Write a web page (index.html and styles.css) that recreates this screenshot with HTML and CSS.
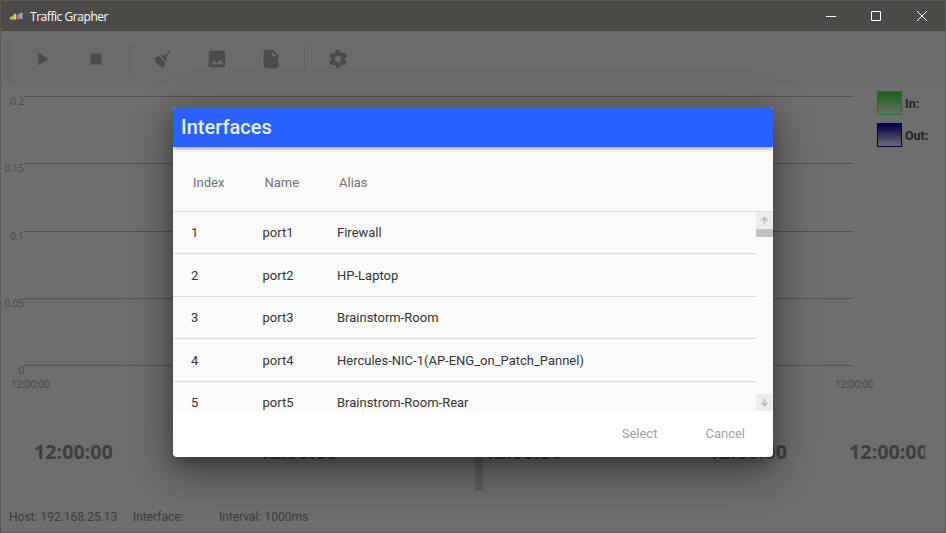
FILE: index.html
```html
<!DOCTYPE html>
<html lang="en">
<head>
<meta charset="utf-8">
<title>Traffic Grapher</title>
<link rel="stylesheet" href="styles.css">
</head>
<body>
<div class="window">
  <header class="titlebar">
    <svg class="logo" width="13" height="8" viewBox="0 0 13 8"><path fill="#a5c87b" d="M0 5l3-1v3.500H0z"/><path fill="#f1c65d" d="M3.300 2.500l2.700-1v6H3.300z"/><path fill="#df665d" d="M6.300 3l2.700-1v5.500H6.300z"/><path fill="#76b4dc" d="M9.300 1.500l3.200-1v6.500H9.300z"/></svg>
    <span class="app-name">Traffic Grapher</span>
    <div class="controls">
      <svg width="10" height="10" viewBox="0 0 10 10"><path d="M0 5.500h10"/></svg>
      <svg width="10" height="10" viewBox="0 0 10 10"><path d="M.5.5h9v9h-9z"/></svg>
      <svg width="10" height="10" viewBox="0 0 10 10"><path d="M0 0l10 10M10 0L0 10"/></svg>
    </div>
  </header>
  <nav class="toolbar">
    <i class="grip"></i>
    <div class="group"><svg viewBox="0 0 24 24"><path d="M8 5v14l11-7z"/></svg><svg viewBox="0 0 24 24"><path d="M6 6h12v12H6z"/></svg></div>
    <div class="group middle"><svg viewBox="0 0 24 24"><path d="M19.36 2.72l1.42 1.42-5.72 5.71c1.07 1.54 1.22 3.39.32 4.59L9.06 8.12c1.2-.9 3.05-.75 4.59.32l5.71-5.72M5.93 17.57c-2.01-2.01-3.24-4.41-3.58-6.65l4.88-2.09 7.44 7.44-2.09 4.88c-2.24-.34-4.64-1.57-6.65-3.58z"/></svg><svg viewBox="0 0 24 24"><path d="M5 3h14a2 2 0 0 1 2 2v14a2 2 0 0 1-2 2H5a2 2 0 0 1-2-2V5a2 2 0 0 1 2-2zm0 15h14v-1l-3.500-4.500-3 4L9 13.500z"/></svg><svg viewBox="0 0 24 24"><path d="M13 9h5.500L13 3.500V9M6 2h8l6 6v12a2 2 0 0 1-2 2H6a2 2 0 0 1-2-2V4a2 2 0 0 1 2-2z"/></svg></div>
    <div class="group last"><svg viewBox="0 0 24 24"><path d="M12 15.5A3.5 3.5 0 0 1 8.500 12 3.500 3.500 0 0 1 12 8.500a3.500 3.500 0 0 1 3.500 3.500 3.500 3.500 0 0 1-3.500 3.500m7.430-2.530c.04-.32.07-.64.07-.97s-.03-.66-.07-1l2.110-1.630c.19-.15.24-.42.12-.64l-2-3.460c-.12-.22-.39-.31-.61-.22l-2.490 1c-.52-.39-1.060-.73-1.690-.98l-.37-2.650A.506.506 0 0 0 14 2h-4c-.25 0-.46.18-.5.42l-.37 2.650c-.63.25-1.170.59-1.690.98l-2.490-1c-.22-.09-.49 0-.61.22l-2 3.460c-.13.22-.07.49.12.64L4.570 11c-.04.34-.07.67-.07 1s.03.65.07.97l-2.110 1.660c-.19.15-.25.42-.12.64l2 3.460c.12.22.39.3.61.22l2.490-1.010c.52.4 1.060.74 1.690.99l.37 2.650c.04.24.25.42.5.42h4c.25 0 .46-.18.5-.42l.37-2.650c.63-.26 1.170-.59 1.690-.99l2.490 1.010c.22.08.49 0 .61-.22l2-3.460c.12-.22.07-.49-.12-.64z"/></svg></div>
  </nav>
  <main class="content">
    <section class="chart">
      <div class="tick"><span>0.2</span><i></i></div>
      <div class="tick"><span>0.15</span><i></i></div>
      <div class="tick"><span>0.1</span><i></i></div>
      <div class="tick"><span>0.05</span><i></i></div>
      <div class="tick zero"><span>0</span><i></i></div>
      <div class="times"><span>12:00:00</span><span class="cut">12:00:00</span></div>
    </section>
    <aside class="legend">
      <div class="key"><i class="in"></i><b>In:</b></div>
      <div class="key"><i class="out"></i><b>Out:</b></div>
    </aside>
  </main>
  <section class="overview">
    <span>12:00:00</span><span>12:00:00</span><span>12:00:00</span><span>12:00:00</span><span class="cut">12:00:00</span>
    <i class="handle"></i>
  </section>
  <footer class="status"><span class="host">Host: 192.168.25.13</span><span class="iface">Interface:</span><span>Interval: 1000ms</span></footer>
</div>
<div class="dialog">
  <h1>Interfaces</h1>
  <div class="table">
    <div class="row head"><span>Index</span><span>Name</span><span>Alias</span></div>
    <div class="scroller">
      <div class="rows">
        <div class="row"><span>1</span><span>port1</span><span>Firewall</span></div>
        <div class="row tall"><span>2</span><span>port2</span><span>HP-Laptop</span></div>
        <div class="row"><span>3</span><span>port3</span><span>Brainstorm-Room</span></div>
        <div class="row tall"><span>4</span><span>port4</span><span>Hercules-NIC-1(AP-ENG_on_Patch_Pannel)</span></div>
        <div class="row"><span>5</span><span>port5</span><span>Brainstrom-Room-Rear</span></div>
      </div>
      <div class="scrollbar">
        <div class="arrow"><svg width="9" height="9" viewBox="0 0 9 9"><path d="M4.500 8.500V1.500M1.500 4.500l3-3 3 3"/></svg></div>
        <div class="thumb"></div>
        <div class="arrow down"><svg width="9" height="9" viewBox="0 0 9 9"><path d="M4.500.5v7M1.500 4.500l3 3 3-3"/></svg></div>
      </div>
    </div>
  </div>
  <div class="actions"><span>Select</span><span>Cancel</span></div>
</div>
</body>
</html>
```
FILE: styles.css
```css
* { box-sizing: border-box; }
body { margin: 0; font-family: Roboto, sans-serif; overflow: hidden; }
.window {
  width: 946px; height: 533px;
  display: flex; flex-direction: column;
  background: #6e6e6e;
  border: 1px solid #5a5959;
  color: #3d3d3d;
}
.titlebar {
  height: 30px; flex: none;
  display: flex; align-items: center;
  padding-left: 9px;
  background: #4b4a47; color: #fff;
}
.logo { margin-right: 7px; }
.app-name { font: 12px "Open Sans", sans-serif; letter-spacing: -.45px; }
.controls { display: flex; gap: 36px; margin: 0 18px 0 auto; }
.controls svg { fill: none; stroke: #fff; stroke-width: 1; }
.controls svg:first-child { margin-right: -1px; }
.toolbar { height: 56px; flex: none; display: flex; align-items: center; background: #6b6b6b; }
.toolbar svg { width: 22px; height: 22px; fill: #4b4b4b; fill-rule: evenodd; }
.grip { width: 2px; height: 47px; margin: 3px 0 0 6px; background: repeating-linear-gradient(#646464 0 2px, transparent 2px 4px); }
.group { display: flex; gap: 32px; padding-left: 22px; }
.middle, .last { height: 32px; align-items: center; border-left: 1px solid #616161; }
.middle { margin-left: 22px; }
.last { margin-left: 22px; }
.content { height: 310px; flex: none; display: flex; }
.chart { width: 872px; padding-top: 9px; overflow: hidden; }
.tick { height: 67.25px; display: flex; align-items: flex-start; font: 10px/12px "Noto Sans", sans-serif; color: #4b4b4b; }
.tick span { width: 23px; text-align: right; letter-spacing: -.1px; transform: translateY(-1px); }
.tick i { width: 829px; height: 1px; background: #505054; }
.zero { height: 13px; }
.times { display: flex; justify-content: space-between; font: 10px/12px "Noto Sans", sans-serif; color: #4b4b4b; padding-left: 10px; letter-spacing: -.1px; }
.times .cut { width: 38px; overflow: hidden; white-space: nowrap; }
.legend { padding: 4px 0 0 4px; display: flex; flex-direction: column; gap: 8px; }
.key { display: flex; align-items: center; gap: 3px; font-size: 12.500px; color: #242424; }
.key i { width: 25px; height: 24px; border: 1px solid; }
.key .in { border-color: #276f27; background: linear-gradient(#1c5f1c, #657265); }
.key .out { border-color: #000044; background: linear-gradient(#000044, #6b6b70); }
.overview {
  position: relative; height: 105px; flex: none;
  display: flex; padding: 41px 0 0 33px;
  font: bold 19.750px/27px "Noto Sans", sans-serif; color: #3f3f3f;
}
.overview span { width: 224.700px; }
.overview span:nth-child(4) { width: 141px; }
.overview .cut { width: 76px; overflow: hidden; }
.handle { position: absolute; left: 474px; top: 50px; width: 8px; height: 44px; background: #5e5e5e; }
.status { height: 30px; display: flex; align-items: center; padding-left: 8px; font-size: 12px; }
.host { width: 124px; }
.iface { width: 86px; }
.dialog {
  position: absolute; left: 173px; top: 107px; width: 600px; height: 350px;
  display: flex; flex-direction: column;
  border-radius: 4px; overflow: hidden; background: #fff;
  box-shadow: 0 11px 15px -7px rgba(0,0,0,.2), 0 24px 38px 3px rgba(0,0,0,.14), 0 9px 46px 8px rgba(0,0,0,.12), 0 6px 24px rgba(0,0,0,.25);
}
h1 {
  margin: 0; height: 40px; flex: none; padding-left: 8px; z-index: 1;
  font-size: 20px; line-height: 40px; font-weight: 500;
  background: #2962ff; color: #e9efff;
  box-shadow: 0 2px 4px rgba(0,0,0,.35);
}
.table { height: 256px; margin-top: 8px; background: #fafafa; font-size: 13px; color: #353535; }
.row { display: grid; grid-template-columns: 71.500px 74.500px 1fr; align-items: center; height: 42px; padding-left: 18px; border-bottom: 1px solid #dadada; }
.row.tall { height: 43px; }
.row.head { height: 57px; padding: 0 0 1px 20px; color: #737373; }
.scroller { display: flex; height: 199px; overflow: hidden; }
.rows { flex: 1; }
.scrollbar { width: 17px; display: flex; flex-direction: column; }
.arrow { height: 17px; display: grid; place-items: center; background: #ececec; }
.arrow svg { fill: none; stroke: #b7b7b7; stroke-width: 1.300; }
.thumb { height: 8px; background: #c2c2c2; }
.down { margin-top: auto; }
.actions { height: 44px; display: flex; justify-content: flex-end; align-items: center; gap: 48px; padding-right: 28px; font-size: 13px; color: #a0a0a0; }
```
